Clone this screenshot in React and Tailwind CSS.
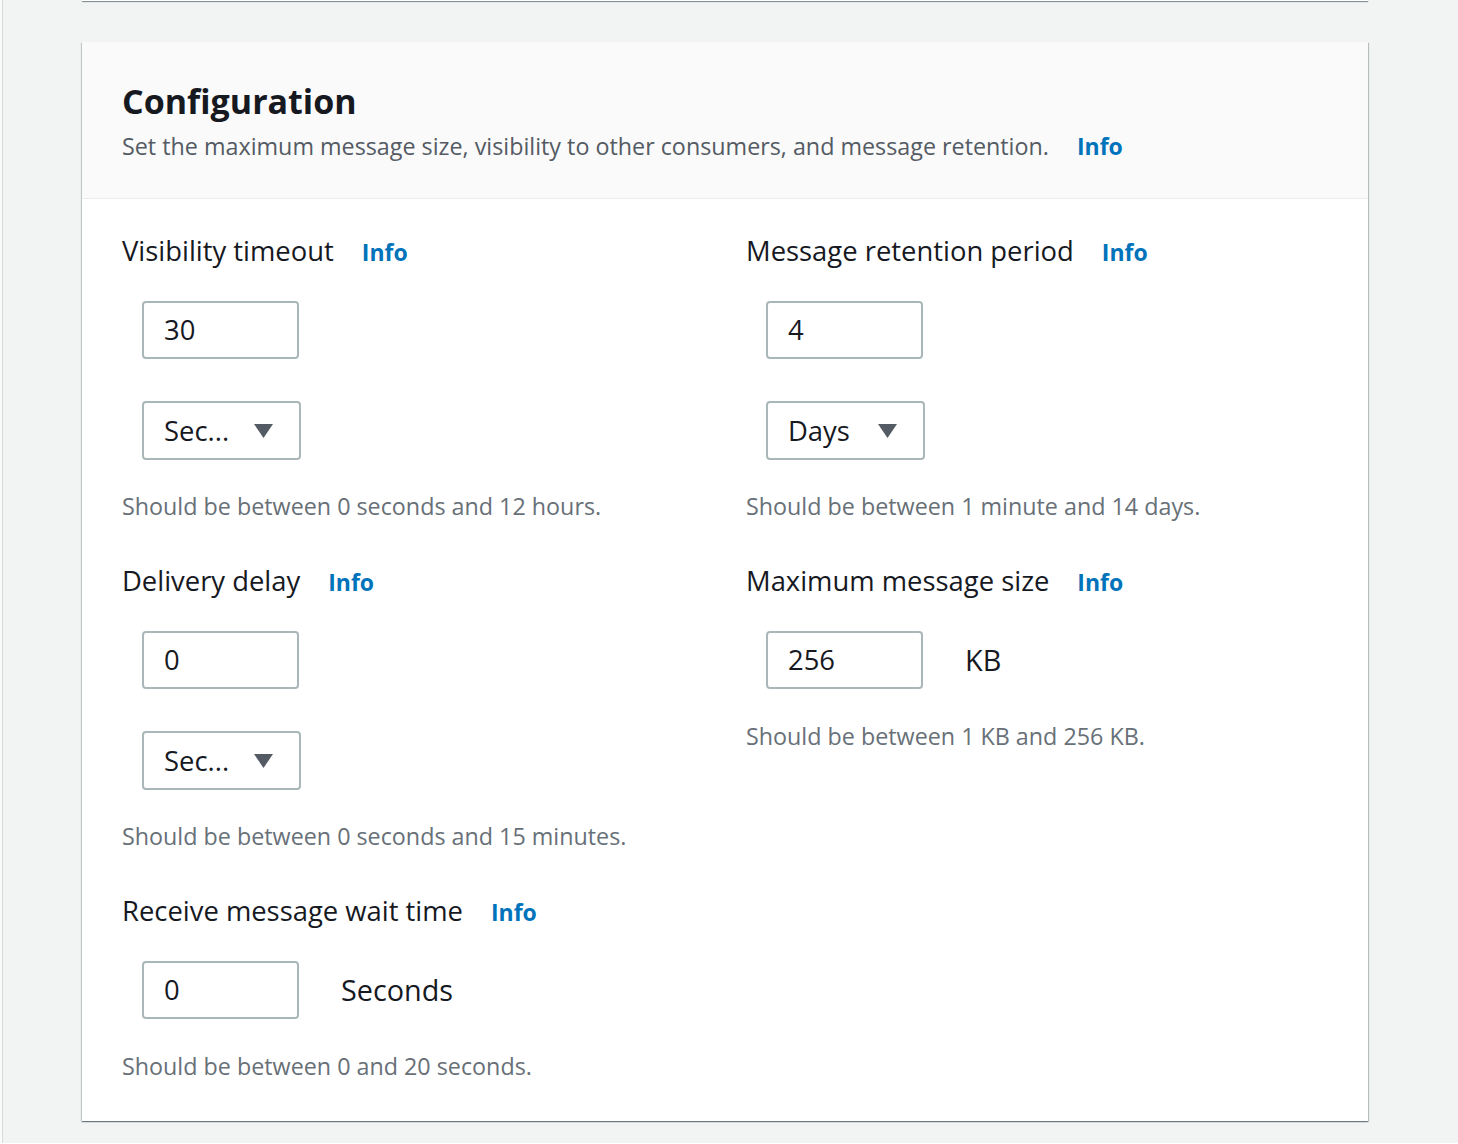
const FONT = "font-['Open_Sans',sans-serif]"

function Info() {
  return <a className="text-[23px] leading-[32px] font-bold text-[#0073bb] ml-[28px]">Info</a>
}

function Label({ children }) {
  return (
    <div className="flex items-baseline h-[32px]">
      <span className="text-[27.4px] leading-[32px] text-[#16191f]">{children}</span>
      <Info />
    </div>
  )
}

function TextInput({ value }) {
  return (
    <div className="w-[157px] h-[58px] border-2 border-[#aab7b8] rounded-[4px] bg-white flex items-center pl-[20px] text-[27.4px] text-[#16191f]">
      {value}
    </div>
  )
}

function Select({ value }) {
  return (
    <div className="w-[159px] h-[59px] border-2 border-[#aab7b8] rounded-[4px] bg-white flex items-center justify-between pl-[20px] pr-[26px] text-[27.4px] text-[#16191f]">
      <span>{value}</span>
      <svg width="19" height="14" viewBox="0 0 19 14">
        <path d="M0 0 H19 L9.5 14 Z" fill="#545b64" />
      </svg>
    </div>
  )
}

function Hint({ children }) {
  return <p className="text-[23.3px] leading-[28px] text-[#687078]">{children}</p>
}

function Field({ label, value, unit, select, hint }) {
  return (
    <div className="flex flex-col">
      <Label>{label}</Label>
      <div className="pl-[20px] mt-[34px] flex items-center">
        <TextInput value={value} />
        {unit && <span className="ml-[42px] text-[28.8px] text-[#16191f]">{unit}</span>}
      </div>
      {select && (
        <div className="pl-[20px] mt-[42px]">
          <Select value={select} />
        </div>
      )}
      <div className={unit ? 'mt-[33px]' : 'mt-[32px]'}>
        <Hint>{hint}</Hint>
      </div>
    </div>
  )
}

export default function App() {
  return (
    <div className={`${FONT} min-h-[1144px] bg-[#fafafa] pl-[2px]`}>
      <div className="min-h-[1144px] bg-[#f2f3f3] border-l border-[#d5dbdb] pl-[79px]">
        <div className="w-[1286px] h-[2px] bg-white shadow-[0_1px_1px_0_rgba(0,28,36,0.5)] -mt-[1px]" />
        <div className="w-[1286px] mt-[41px] bg-white shadow-[0_1px_1px_0_rgba(0,28,36,0.35),1px_1px_1px_0_rgba(0,28,36,0.2),-1px_1px_1px_0_rgba(0,28,36,0.15)]">
          <div className="bg-[#fafafa] border-b border-[#eaeded] px-[40px] pt-[37px] h-[157px]">
            <h2 className="text-[34px] leading-[44px] font-bold text-[#16191f]">Configuration</h2>
            <div className="flex items-baseline mt-[7px]">
              <span className="text-[23.3px] leading-[32px] text-[#545b64]">
                Set the maximum message size, visibility to other consumers, and message retention.
              </span>
              <Info />
            </div>
          </div>
          <div className="px-[40px] pt-[36px] pb-[41px] grid grid-cols-2 gap-x-[42px] items-start">
            <div className="flex flex-col gap-y-[45px]">
              <Field label="Visibility timeout" value="30" select="Sec..." hint="Should be between 0 seconds and 12 hours." />
              <Field label="Delivery delay" value="0" select="Sec..." hint="Should be between 0 seconds and 15 minutes." />
              <Field label="Receive message wait time" value="0" unit="Seconds" hint="Should be between 0 and 20 seconds." />
            </div>
            <div className="flex flex-col gap-y-[45px]">
              <Field label="Message retention period" value="4" select="Days" hint="Should be between 1 minute and 14 days." />
              <Field label="Maximum message size" value="256" unit="KB" hint="Should be between 1 KB and 256 KB." />
            </div>
          </div>
        </div>
      </div>
    </div>
  )
}
